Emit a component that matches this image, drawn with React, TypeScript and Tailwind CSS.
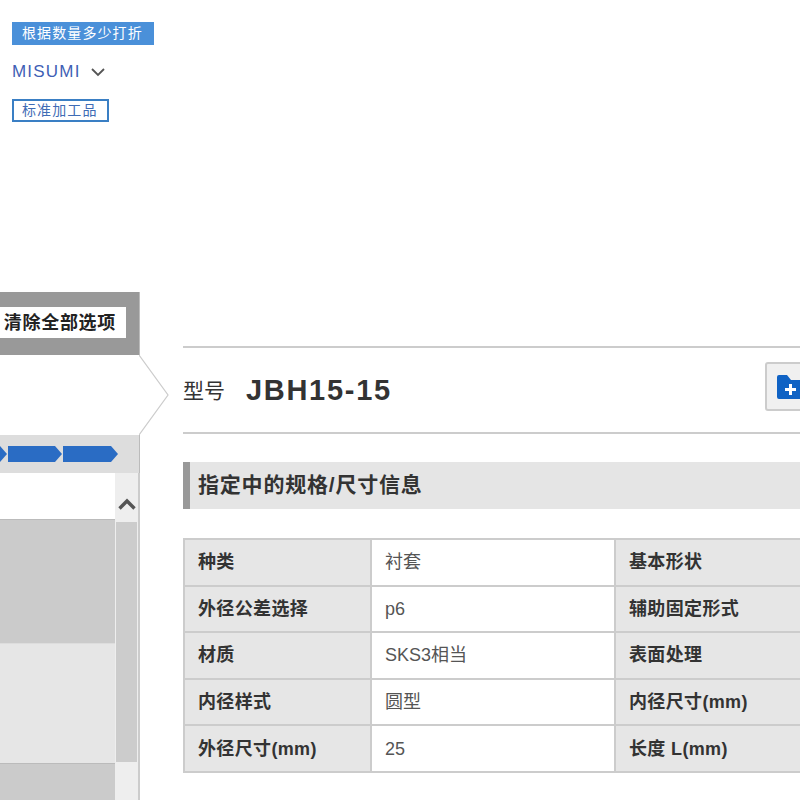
const rows = [
  ["种类", "衬套", "基本形状"],
  ["外径公差选择", "p6", "辅助固定形式"],
  ["材质", "SKS3相当", "表面处理"],
  ["内径样式", "圆型", "内径尺寸(mm)"],
  ["外径尺寸(mm)", "25", "长度 L(mm)"],
];

function Arrow({ w }: { w: number }) {
  return (
    <svg width={w} height={16} viewBox={`0 0 ${w} 16`} className="block shrink-0">
      <polygon points={`0,0 ${w - 7},0 ${w},8 ${w - 7},16 0,16`} fill="#2a6cc4" />
    </svg>
  );
}

export default function App() {
  return (
    <div className="w-[800px] h-[800px] overflow-hidden bg-white font-['Liberation_Sans','Noto_Sans_CJK_SC',sans-serif] text-[#333]">
      <div className="h-[292px] pl-3 pt-[22px] flex flex-col items-start">
        <div className="h-[23px] w-[142px] bg-[#4a90d9] text-white text-[14px] leading-[23px] tracking-[1.1px] pl-[10px] whitespace-nowrap">根据数量多少打折</div>
        <div className="mt-[18px] h-[18px] flex items-center gap-[10px]">
          <span className="text-[#3f5fb5] text-[17px] tracking-[1.2px] leading-[18px]">MISUMI</span>
          <svg width="14" height="9" viewBox="0 0 14 9" fill="none" stroke="#555" strokeWidth="1.8"><path d="M1 1l6 6 6-6" /></svg>
        </div>
        <div className="mt-[18px] h-[23px] w-[97px] border-2 border-[#3a7fc4] text-[#3f6cb5] text-[14px] leading-[19px] tracking-[1.1px] pl-2 whitespace-nowrap">标准加工品</div>
      </div>
      <div className="flex">
        <div className="w-[140px] shrink-0 relative h-[508px]">
          <div className="h-[63px] bg-[#999] border-r border-[#bbb] pt-[15px]">
            <div className="w-[126px] h-[31px] bg-white text-[#222] font-bold text-[18px] tracking-[0.7px] leading-[33px] text-right pr-[10px] whitespace-nowrap">清除全部选项</div>
          </div>
          <div className="h-[80px]" />
          <svg width="32" height="80" viewBox="0 0 32 80" fill="none" stroke="#ccc" strokeWidth="1.2" className="absolute left-[139px] top-[63px]"><path d="M0 0l29 40L0 80" /></svg>
          <div className="h-[38px] bg-[#ddd] border-r border-[#bbb] flex items-center gap-[1px] overflow-hidden justify-end pr-[21px]">
            <Arrow w={8} />
            <Arrow w={54} />
            <Arrow w={55} />
          </div>
          <div className="h-[327px] flex border-r-2 border-[#ccc]">
            <div className="w-[115px] shrink-0 flex flex-col">
              <div className="h-[46px] bg-white" />
              <div className="h-[124px] bg-[#cbcbcb] border-t border-[#bbb]" />
              <div className="h-[120px] bg-[#e6e6e6] border-t border-[#ddd]" />
              <div className="flex-1 bg-[#cbcbcb] border-t border-[#bbb]" />
            </div>
            <div className="flex-1 bg-[#eee] flex flex-col items-center">
              <div className="h-[49px] flex items-center justify-center pt-[13px]">
                <svg width="18" height="12" viewBox="0 0 18 12" fill="none" stroke="#555" strokeWidth="3.4"><path d="M1.500 10.500L9 3l7.500 7.500" /></svg>
              </div>
              <div className="w-[21px] h-[240px] bg-[#ccc]" />
            </div>
          </div>
        </div>
        <div className="ml-[43px] flex-1 min-w-0 pt-[54px]">
          <div className="w-[617px] h-[88px] border-y-2 border-[#ccc] flex items-center relative">
            <span className="text-[21px] text-[#333] leading-none">型号</span>
            <span className="ml-[21px] font-bold text-[29px] tracking-[1.7px] text-[#333] leading-none">JBH15-15</span>
            <div className="absolute left-[582px] top-[14px] w-[60px] h-[49px] bg-[#f0f0f0] border-2 border-[#ccc] rounded-[3px] pl-[10px] pt-[11px]">
              <svg width="26" height="24" viewBox="0 0 26 24"><path d="M0 2a2 2 0 0 1 2-2h8l4 5h12v19H2a2 2 0 0 1-2-2z" fill="#0f62c4" /><path d="M12 9h3v4h4v3h-4v4h-3v-4H8v-3h4z" fill="#fff" /></svg>
            </div>
          </div>
          <div className="mt-[28px] w-[617px] h-[47px] bg-[#e5e5e5] border-l-[7px] border-[#999] flex items-center pl-2 pb-[1px] font-bold text-[21px] tracking-[0.8px] text-[#333] whitespace-nowrap">指定中的规格/尺寸信息</div>
          <div className="mt-[29px] w-[660px] grid grid-cols-[187px_244px_229px] border-t-2 border-l-2 border-[#ccc]">
            {rows.map((r) => (
              <div key={r[0]} className="contents">
                <div className="h-[46.6px] bg-[#e6e6e6] border-r-2 border-b-2 border-[#ccc] flex items-center pl-[13px] pt-[1px] font-bold text-[18px] tracking-[0.35px] text-[#333] whitespace-nowrap">{r[0]}</div>
                <div className="h-[46.6px] bg-white border-r-2 border-b-2 border-[#ccc] flex items-center pl-[13px] pt-[1px] text-[18px] text-[#555] whitespace-nowrap">{r[1]}</div>
                <div className="h-[46.6px] bg-[#e6e6e6] border-b-2 border-[#ccc] flex items-center pl-[13px] pt-[1px] font-bold text-[18px] tracking-[0.35px] text-[#333] whitespace-nowrap">{r[2]}</div>
              </div>
            ))}
          </div>
        </div>
      </div>
    </div>
  );
}
